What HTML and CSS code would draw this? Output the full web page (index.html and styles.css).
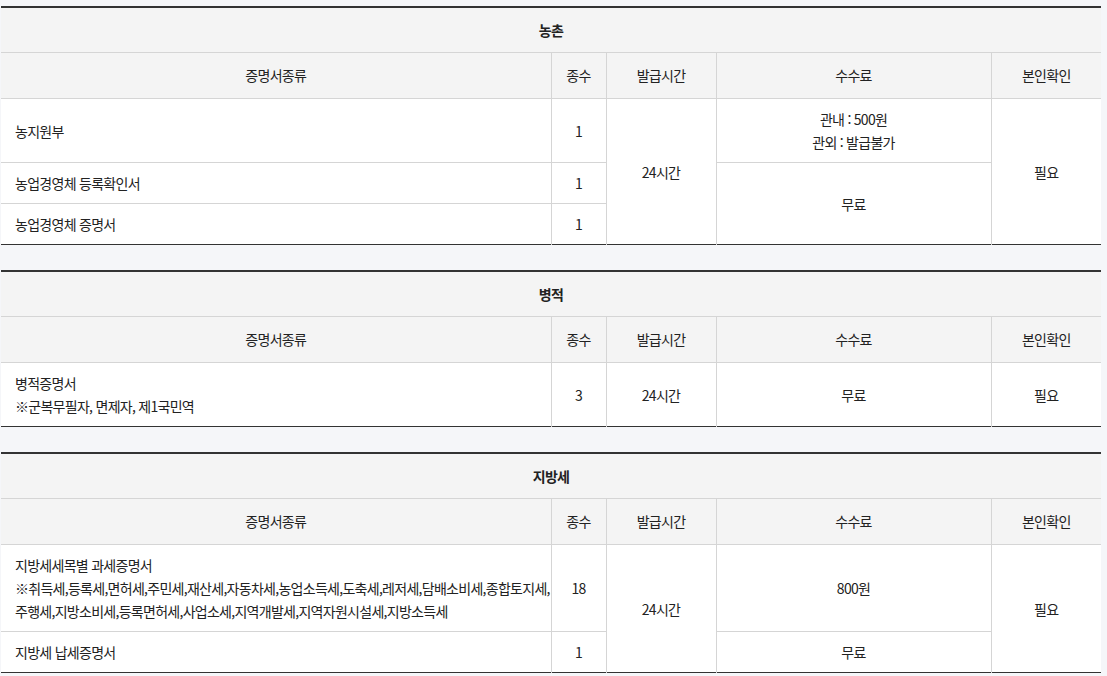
FILE: index.html
```html
<!DOCTYPE html>
<html lang="ko">
<head>
<meta charset="utf-8">
<link rel="stylesheet" href="styles.css">
</head>
<body>
<div class="page">
  <table class="cert">
    <colgroup><col class="c1"><col class="c2"><col class="c3"><col class="c4"><col class="c5"></colgroup>
    <thead>
      <tr><th colspan="5" class="title">농촌</th></tr>
      <tr><th>증명서종류</th><th>종수</th><th>발급시간</th><th>수수료</th><th>본인확인</th></tr>
    </thead>
    <tbody>
      <tr><td class="name">농지원부</td><td>1</td><td rowspan="3">24시간</td><td>관내 : 500원<br>관외 : 발급불가</td><td rowspan="3">필요</td></tr>
      <tr><td class="name">농업경영체 등록확인서</td><td>1</td><td rowspan="2">무료</td></tr>
      <tr><td class="name">농업경영체 증명서</td><td>1</td></tr>
    </tbody>
  </table>

  <table class="cert">
    <colgroup><col class="c1"><col class="c2"><col class="c3"><col class="c4"><col class="c5"></colgroup>
    <thead>
      <tr><th colspan="5" class="title">병적</th></tr>
      <tr><th>증명서종류</th><th>종수</th><th>발급시간</th><th>수수료</th><th>본인확인</th></tr>
    </thead>
    <tbody>
      <tr><td class="name">병적증명서<br>※군복무필자, 면제자, 제1국민역</td><td>3</td><td>24시간</td><td>무료</td><td>필요</td></tr>
    </tbody>
  </table>

  <table class="cert">
    <colgroup><col class="c1"><col class="c2"><col class="c3"><col class="c4"><col class="c5"></colgroup>
    <thead>
      <tr><th colspan="5" class="title">지방세</th></tr>
      <tr><th>증명서종류</th><th>종수</th><th>발급시간</th><th>수수료</th><th>본인확인</th></tr>
    </thead>
    <tbody>
      <tr><td class="name">지방세세목별 과세증명서<br>※취득세,등록세,면허세,주민세,재산세,자동차세,농업소득세,도축세,레저세,담배소비세,종합토지세,<br>주행세,지방소비세,등록면허세,사업소세,지역개발세,지역자원시설세,지방소득세</td><td>18</td><td rowspan="2">24시간</td><td>800원</td><td rowspan="2">필요</td></tr>
      <tr><td class="name">지방세 납세증명서</td><td>1</td><td>무료</td></tr>
    </tbody>
  </table>
</div>
</body>
</html>
```

FILE: styles.css
```css
html, body {
  margin: 0;
  padding: 0;
  background: #f5f6f9;
}

body {
  font-family: "Noto Sans CJK KR", "Noto Sans", sans-serif;
  font-size: 14px;
  color: #222;
  letter-spacing: -0.72px;
}

.page {
  padding: 6px 6px 0 1px;
  display: flex;
  flex-direction: column;
  gap: 25px;
}

.cert {
  width: 1100px;
  border-collapse: collapse;
  table-layout: fixed;
  background: #fff;
  border-top: 2px solid #333;
  border-bottom: 1px solid #333;
}

.c1 { width: 550px; }
.c2 { width: 55px; }
.c3 { width: 110px; }
.c4 { width: 275px; }
.c5 { width: 110px; }

.cert th {
  background: #f4f4f4;
  font-weight: 400;
  height: 45px;
  padding: 0;
  border: 1px solid #d5d5d5;
  border-top: 0;
  text-align: center;
  vertical-align: middle;
  line-height: 23px;
}

.cert th.title {
  font-weight: 700;
  height: 44px;
}

.cert th:first-child, .cert td:first-child { border-left: 0; }
.cert th:last-child, .cert td:last-child { border-right: 0; }

.cert td {
  border: 1px solid #d5d5d5;
  padding: 9px 4px 8px;
  line-height: 23px;
  text-align: center;
  vertical-align: middle;
}

.cert td.name {
  text-align: left;
  padding-left: 14px;
  white-space: nowrap;
}

.cert tbody tr:last-child td { border-bottom: 0; }
.cert tbody td[rowspan] { border-bottom: 0; }
```
